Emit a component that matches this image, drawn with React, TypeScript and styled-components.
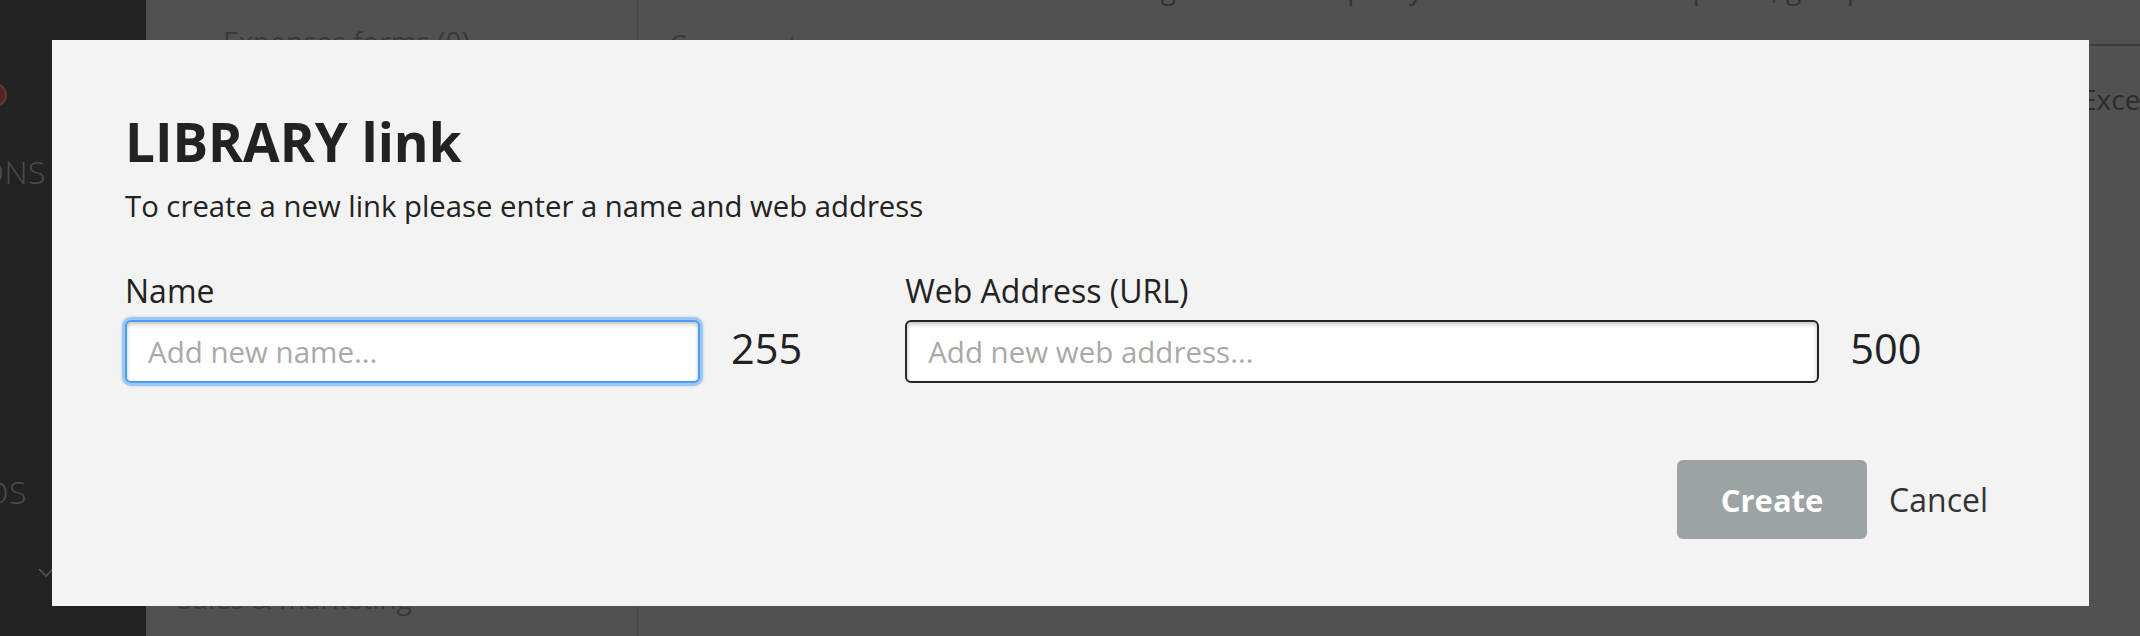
import React from "react";
import styled, { createGlobalStyle } from "styled-components";

const GlobalStyle = createGlobalStyle`
  html, body {
    margin: 0;
    padding: 0;
    width: 2140px;
    height: 636px;
    overflow: hidden;
    background: #515151;
    font-family: "Open Sans", "Noto Sans", sans-serif;
  }
  * { box-sizing: border-box; }
`;

const Page = styled.div`
  display: flex;
  width: 2140px;
  height: 636px;
  overflow: hidden;
`;

const Sidebar = styled.aside`
  width: 146px;
  flex: none;
  background: #232323;
  display: flex;
  flex-direction: column;
  overflow: hidden;
`;

const SideRow = styled.div<{ $right: number; $top: number }>`
  display: flex;
  justify-content: flex-end;
  padding-right: ${(p) => p.$right}px;
  margin-top: ${(p) => p.$top}px;
  white-space: nowrap;
`;

const Dot = styled.span`
  width: 24px;
  height: 24px;
  flex: none;
  border-radius: 50%;
  background: #4e2424;
  border: 2px solid #6a3535;
`;

const SideLabel = styled.span`
  flex: none;
  font-size: 32px;
  line-height: 40px;
  font-weight: 300;
  color: #4c4c4c;
  letter-spacing: 0.5px;
`;

const Main = styled.main`
  flex: 1;
  display: flex;
  background: #515151;
`;

const ListColumn = styled.section`
  width: 492px;
  flex: none;
  border-right: 1px solid #444444;
  display: flex;
  flex-direction: column;
  padding-bottom: 20px;
`;

const ListItem = styled.div<{ $left: number; $top?: number }>`
  padding-left: ${(p) => p.$left}px;
  margin-top: ${(p) => (p.$top === undefined ? "auto" : `${p.$top}px`)};
  font-size: 28px;
  line-height: 36px;
  color: #393939;
  white-space: nowrap;
`;

const DetailColumn = styled.section`
  flex: 1;
  display: flex;
  flex-direction: column;
  overflow: hidden;
`;

const DetailHeader = styled.header`
  height: 46px;
  flex: none;
  border-bottom: 2px solid #3e3e3e;
  display: flex;
  flex-direction: column;
  overflow: hidden;
`;

const HeaderTitle = styled.div`
  margin-top: -30px;
  padding-left: 440px;
  font-size: 28px;
  line-height: 36px;
  color: #333;
  white-space: nowrap;
`;

const HeaderSub = styled.div`
  margin-top: 20px;
  padding-left: 31px;
  font-size: 28px;
  line-height: 36px;
  color: #3a3a3a;
  white-space: nowrap;
`;

const Toolbar = styled.div`
  margin-top: 35px;
  padding-left: 1443px;
  font-size: 28px;
  line-height: 36px;
  color: #2c2c2c;
  white-space: nowrap;
`;

const Modal = styled.div`
  position: fixed;
  top: 40px;
  left: 52px;
  width: 2037px;
  height: 566px;
  background: #f3f3f3;
  padding: 74px 101px 67px 73px;
  display: flex;
  flex-direction: column;
  color: #222222;
`;

const Title = styled.h1`
  margin: 0;
  font-size: 53px;
  line-height: 56px;
  font-weight: 700;
  color: #222222;
`;

const Description = styled.p`
  margin: 18px 0 0;
  font-size: 29.3px;
  line-height: 36px;
  color: #222222;
`;

const Fields = styled.div`
  display: flex;
  margin-top: 49px;
  gap: 103px;
`;

const FieldGroup = styled.div`
  display: flex;
  flex-direction: column;
`;

const Label = styled.label`
  font-size: 32px;
  line-height: 36px;
  margin-bottom: 11px;
  color: #222222;
`;

const InputRow = styled.div`
  display: flex;
  align-items: center;
`;

const TextInput = styled.input<{ $width: number; $focused?: boolean }>`
  width: ${(p) => p.$width}px;
  height: 63px;
  padding: 0 21px;
  border-radius: 6px;
  border: 2px solid ${(p) => (p.$focused ? "#4a9df0" : "#262626")};
  background: #ffffff;
  font-family: "Open Sans", sans-serif;
  font-size: 29.5px;
  color: #222;
  outline: none;
  box-shadow: ${(p) =>
    p.$focused
      ? "0 0 0 3px rgba(90, 165, 240, 0.45), 0 0 2px 4px rgba(90, 165, 240, 0.2), inset 0 2px 4px rgba(0, 0, 0, 0.25)"
      : "inset 0 2px 4px rgba(0, 0, 0, 0.25)"};
  &::placeholder {
    color: #a9a9a9;
  }
`;

const Count = styled.span`
  margin-left: 31px;
  margin-bottom: 8px;
  font-size: 41.5px;
  line-height: 42px;
  color: #222222;
`;

const Footer = styled.div`
  margin-top: auto;
  display: flex;
  justify-content: flex-end;
  align-items: center;
`;

const CreateButton = styled.button`
  width: 190px;
  height: 79px;
  border: none;
  border-radius: 6px;
  background: #9ca3a4;
  color: #ffffff;
  font-family: "Open Sans", sans-serif;
  font-weight: 700;
  font-size: 31px;
  padding: 0;
`;

const CancelButton = styled.button`
  margin-left: 22px;
  border: none;
  background: transparent;
  padding: 0;
  font-family: "Open Sans", sans-serif;
  font-size: 32px;
  color: #333333;
`;

const Chevron = () => (
  <svg width="16" height="10" viewBox="0 0 16 10" fill="none">
    <path d="M1 1l7 7 7-7" stroke="#555" strokeWidth="1.6" />
  </svg>
);

export default function App() {
  return (
    <>
      <GlobalStyle />
      <Page>
        <Sidebar>
          <SideRow $right={139} $top={83}>
            <Dot />
          </SideRow>
          <SideRow $right={100} $top={45}>
            <SideLabel>QUICK ACTIONS</SideLabel>
          </SideRow>
          <SideRow $right={119} $top={280}>
            <SideLabel>VIDEOS</SideLabel>
          </SideRow>
          <SideRow $right={92} $top={56}>
            <Chevron />
          </SideRow>
        </Sidebar>
        <Main>
          <ListColumn>
            <ListItem $left={77} $top={23}>Expenses forms (0)</ListItem>
            <ListItem $left={31}>Sales &amp; marketing</ListItem>
          </ListColumn>
          <DetailColumn>
            <DetailHeader>
              <HeaderTitle>Catalogue of shared policy documents and templates, grouped</HeaderTitle>
              <HeaderSub>Comments</HeaderSub>
            </DetailHeader>
            <Toolbar>Excel</Toolbar>
          </DetailColumn>
        </Main>
      </Page>
      <Modal>
        <Title>LIBRARY link</Title>
        <Description>To create a new link please enter a name and web address</Description>
        <Fields>
          <FieldGroup>
            <Label>Name</Label>
            <InputRow>
              <TextInput $width={575} $focused placeholder="Add new name..." />
              <Count>255</Count>
            </InputRow>
          </FieldGroup>
          <FieldGroup>
            <Label>Web Address (URL)</Label>
            <InputRow>
              <TextInput $width={914} placeholder="Add new web address..." />
              <Count>500</Count>
            </InputRow>
          </FieldGroup>
        </Fields>
        <Footer>
          <CreateButton>Create</CreateButton>
          <CancelButton>Cancel</CancelButton>
        </Footer>
      </Modal>
    </>
  );
}
